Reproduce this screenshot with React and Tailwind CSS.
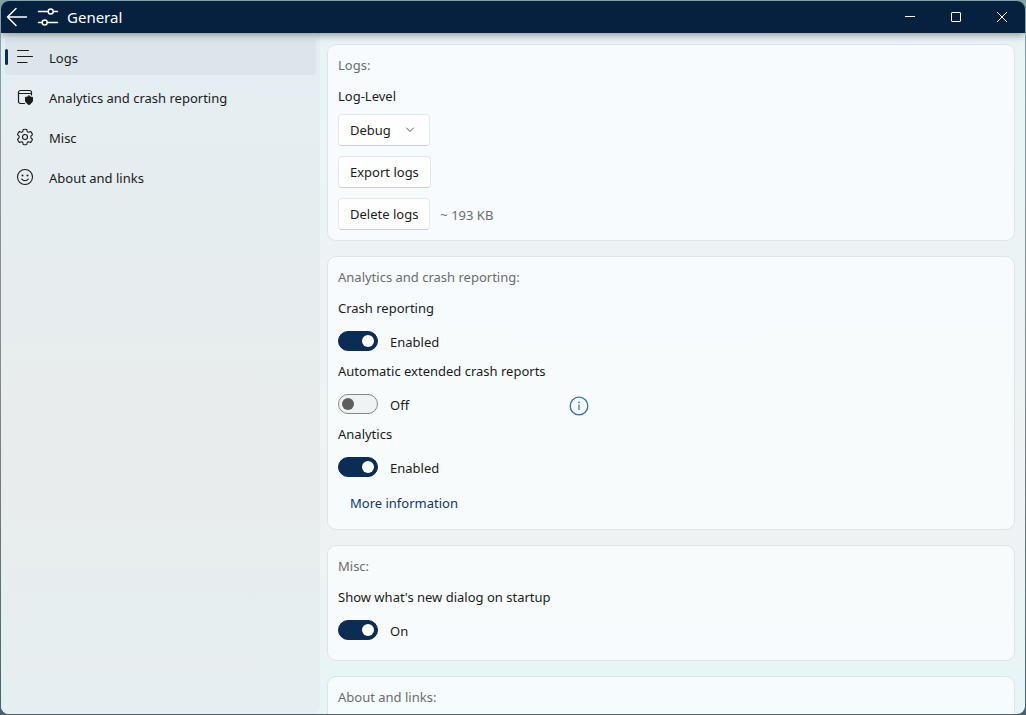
import React from 'react';

const NAV = [
  { id: 'logs', label: 'Logs', icon: LogsIcon, active: true },
  { id: 'analytics', label: 'Analytics and crash reporting', icon: WindowShieldIcon },
  { id: 'misc', label: 'Misc', icon: GearIcon },
  { id: 'about', label: 'About and links', icon: SmileIcon },
];

function LogsIcon() {
  return (
    <svg width="20" height="20" viewBox="0 0 20 20" fill="none" stroke="currentColor" strokeLinecap="round">
      <path d="M2.5 3.5h11M2.5 9.5h15M2.5 15.5h9.500" />
    </svg>
  );
}

function WindowShieldIcon() {
  return (
    <svg width="20" height="20" viewBox="0 0 20 20" fill="none" stroke="currentColor" strokeWidth="1.200" strokeLinecap="round">
      <path d="M9.500 16.500H5.500a2 2 0 0 1-2-2V5.500a2 2 0 0 1 2-2H14.500a2 2 0 0 1 2 2V8M3.500 6.500h13" />
      <path d="M14 9c1 .9 2.200 1.300 3.500 1.300v2.700c0 2.200-1.300 3.700-3.500 4.500-2.200-.8-3.500-2.300-3.500-4.500V10.300c1.300 0 2.500-.4 3.500-1.300z" fill="currentColor" strokeWidth="1" />
    </svg>
  );
}

function GearIcon() {
  return (
    <svg width="20" height="20" viewBox="0 0 20 20" fill="none" stroke="currentColor" strokeWidth="1.100" strokeLinejoin="round">
      <path d="M8.200 2.500Q10 2 11.800 2.500L12.200 4.500Q12.700 5.300 13.500 5.200L15.600 4.500Q16.900 5.800 17.500 7.600L16 9.100Q15.500 10 16 10.900L17.500 12.400Q16.900 14.200 15.600 15.500L13.500 14.800Q12.700 14.700 12.200 15.500L11.800 17.500Q10 18 8.200 17.500L7.800 15.500Q7.300 14.700 6.500 14.800L4.400 15.500Q3.100 14.200 2.500 12.400L4 10.900Q4.500 10 4 9.100L2.500 7.600Q3.100 5.800 4.400 4.500L6.500 5.200Q7.300 5.300 7.800 4.500Z" />
      <circle cx="10" cy="10" r="2.500" />
    </svg>
  );
}

function SmileIcon() {
  return (
    <svg width="20" height="20" viewBox="0 0 20 20" fill="none" stroke="currentColor" strokeWidth="1.100" strokeLinecap="round">
      <circle cx="10" cy="10" r="7.500" />
      <path d="M6.700 12.200c1.700 2.100 4.900 2.100 6.600 0" />
      <circle cx="7.500" cy="8.500" r="1" fill="currentColor" stroke="none" />
      <circle cx="12.500" cy="8.500" r="1" fill="currentColor" stroke="none" />
    </svg>
  );
}

function TitleBar() {
  return (
    <header className="relative z-10 flex h-8 shrink-0 items-center bg-[#06203f] text-white shadow-[0_2px_8px_rgba(0,0,0,0.4)]">
      <button type="button" aria-label="Back" className="ml-1 flex size-6 items-center justify-center">
        <svg width="24" height="24" viewBox="0 0 24 24" fill="none" stroke="currentColor" strokeWidth="1.500" strokeLinecap="round" strokeLinejoin="round">
          <path d="M21.500 12H2.500M11 3.500L2.500 12l8.500 8.500" />
        </svg>
      </button>
      <svg className="ml-2 shrink-0" width="22" height="22" viewBox="0 0 22 22" fill="none" stroke="currentColor" strokeWidth="1.400" strokeLinecap="round">
        <path d="M1.500 5.500h9.500M16.500 5.500h4M1.500 16.500h3.500M10.500 16.500h10" />
        <circle cx="13.700" cy="5.500" r="2.500" />
        <circle cx="7.700" cy="16.500" r="2.500" />
      </svg>
      <h1 className="ml-2 text-[15px] leading-5">General</h1>
      <div className="ml-auto flex h-full">
        <button type="button" aria-label="Minimize" className="flex w-[46px] items-center justify-center">
          <svg width="10" height="10" viewBox="0 0 10 10" stroke="currentColor"><path d="M0 4.500h10" /></svg>
        </button>
        <button type="button" aria-label="Maximize" className="flex w-[46px] items-center justify-center">
          <svg width="10" height="10" viewBox="0 0 10 10" fill="none" stroke="currentColor"><rect x=".5" y=".5" width="9" height="9" rx=".5" /></svg>
        </button>
        <button type="button" aria-label="Close" className="flex w-[46px] items-center justify-center">
          <svg width="10" height="10" viewBox="0 0 10 10" stroke="currentColor"><path d="M0 0l10 10M10 0L0 10" /></svg>
        </button>
      </div>
    </header>
  );
}

function Sidebar() {
  return (
    <nav className="w-[319px] shrink-0 rounded-br-lg bg-linear-to-b from-[#e4eef2] via-[#e9ecec] via-65% to-[#e5eff1] px-1 pt-1.5">
      <ul className="flex flex-col gap-1">
        {NAV.map(({ id, label, icon: Icon, active }) => (
          <li key={id}>
            <a
              href={`#${id}`}
              aria-current={active ? 'page' : undefined}
              className={`flex h-9 items-center rounded-sm ${active ? 'bg-black/3' : ''}`}
            >
              <span className={`h-4 w-[3px] rounded-full ${active ? 'bg-[#0a2c55]' : ''}`} />
              <span className="ml-[7px]"><Icon /></span>
              <span className="ml-[14px] pt-0.5">{label}</span>
            </a>
          </li>
        ))}
      </ul>
    </nav>
  );
}

function Card({ id, title, children }) {
  return (
    <section id={id} className="rounded-[9px] border border-[#dce6e8] bg-[#fbfeff]/75 p-[10px]">
      <h2 className="mb-[11px] text-[#6a6d6e]">{title}</h2>
      {children}
    </section>
  );
}

function Toggle({ id, label, state, on, children }) {
  return (
    <div className="mb-1">
      <label htmlFor={id}>{label}</label>
      <div className="mt-[7px] flex h-8 items-center">
        <div className="flex w-[231px] items-center gap-3">
          <input
            id={id}
            type="checkbox"
            role="switch"
            defaultChecked={on}
            className="flex h-5 w-10 shrink-0 appearance-none items-center rounded-full border border-[#868888] bg-[#f0f3f4] px-[3px] before:size-3 before:rounded-full before:bg-[#5d5f5f] checked:justify-end checked:border-[#0a2c55] checked:bg-[#0a2c55] checked:before:bg-white"
          />
          <span className="pt-0.5">{state}</span>
        </div>
        {children}
      </div>
    </div>
  );
}

function PushButton({ children }) {
  return (
    <button type="button" className="h-8 rounded-sm border border-[#e3e8e9] border-b-[#cbd0d1] bg-[#fefefe] px-[11px]">
      {children}
    </button>
  );
}

export default function App() {
  return (
    <div className="h-screen bg-linear-to-b from-[#84a1a8] via-[#858b8e] to-[#49626e] p-px font-['Noto_Sans','Open_Sans',sans-serif] text-[13px] leading-5 text-[#1b1b1b]">
      <div className="flex h-full flex-col overflow-hidden rounded-lg bg-linear-to-b from-[#e9f4f7] via-[#eff2f3] via-75% to-[#e7f5f6]">
        <TitleBar />
        <div className="flex min-h-0 flex-1">
          <Sidebar />
          <main className="flex min-w-0 flex-1 flex-col gap-[15px] overflow-hidden pt-[11px] pr-[10px] pl-[7px] *:shrink-0">
            <Card id="logs" title="Logs:">
              <label htmlFor="log-level" className="block">Log-Level</label>
              <div className="mt-2 flex flex-col items-start gap-[10px]">
                <div className="grid items-center">
                  <select
                    id="log-level"
                    defaultValue="Debug"
                    className="col-start-1 row-start-1 h-8 w-[92px] appearance-none rounded-sm border border-[#e3e8e9] border-b-[#cbd0d1] bg-[#fefefe] pl-[11px]"
                  >
                    <option>Error</option>
                    <option>Debug</option>
                  </select>
                  <svg className="pointer-events-none col-start-1 row-start-1 mr-[15px] justify-self-end" width="10" height="10" viewBox="0 0 10 10" fill="none" stroke="#5b5d5e" strokeLinecap="round" strokeLinejoin="round">
                    <path d="M1.500 3L5 6.500L8.500 3" />
                  </svg>
                </div>
                <PushButton>Export logs</PushButton>
                <div className="flex items-center gap-[10px]">
                  <PushButton>Delete logs</PushButton>
                  <span className="pt-0.5 text-[#6a6d6e]">~ 193 KB</span>
                </div>
              </div>
            </Card>

            <Card id="analytics" title="Analytics and crash reporting:">
              <Toggle id="crash" label="Crash reporting" state="Enabled" on />
              <Toggle id="extended" label="Automatic extended crash reports" state="Off">
                <button type="button" aria-label="About extended crash reports" className="pt-1 text-[#2c6fbd]">
                  <svg width="20" height="20" viewBox="0 0 20 20" fill="none" stroke="currentColor">
                    <circle cx="10" cy="10" r="8.800" strokeWidth="1.300" />
                    <path d="M10 8.500v5.500" strokeWidth="1.200" />
                    <circle cx="10" cy="6.300" r=".9" fill="currentColor" stroke="none" />
                  </svg>
                </button>
              </Toggle>
              <Toggle id="usage" label="Analytics" state="Enabled" on />
              <a href="#more" className="flex h-8 items-center px-3 text-[#0c3570]">More information</a>
            </Card>

            <Card id="misc" title="Misc:">
              <Toggle id="whats-new" label="Show what's new dialog on startup" state="On" on />
            </Card>

            <Card id="about" title="About and links:" />
          </main>
        </div>
      </div>
    </div>
  );
}
